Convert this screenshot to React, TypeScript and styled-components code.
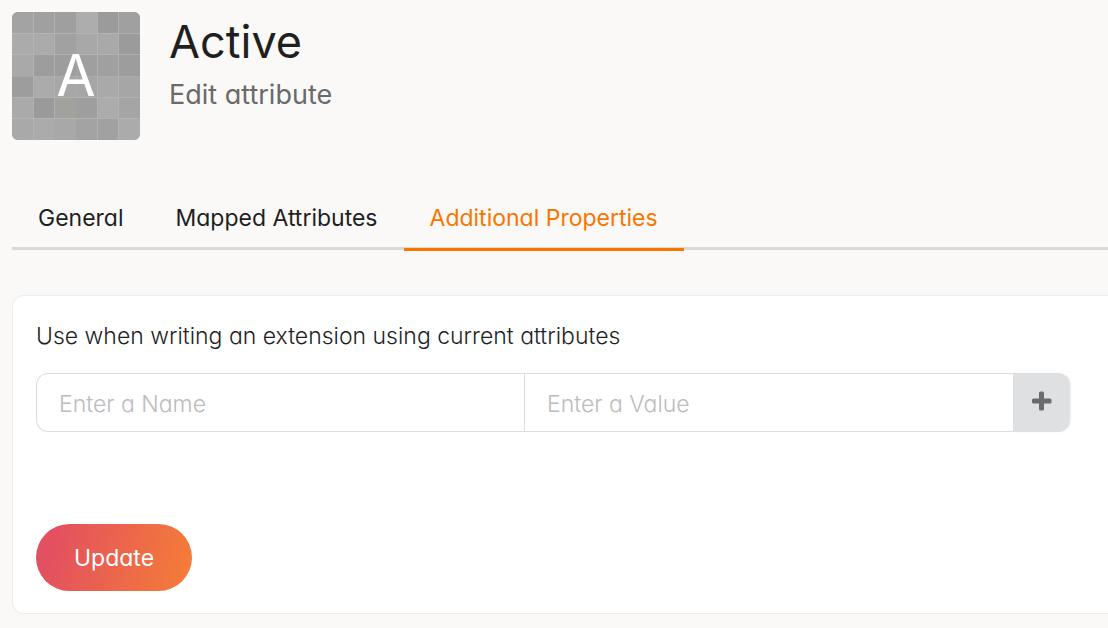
import React, { useState } from "react";
import styled, { createGlobalStyle } from "styled-components";

const GlobalStyle = createGlobalStyle`
  *, *::before, *::after { box-sizing: border-box; }
  body {
    margin: 0;
    background: #faf9f8;
    color: #1f1f1f;
    font-family: Inter, "Open Sans", sans-serif;
    font-feature-settings: "cv11";
    font-size: 23px;
    font-weight: 300;
    line-height: 32px;
  }
  button, input { font: inherit; font-feature-settings: inherit; letter-spacing: inherit; }
`;

const Page = styled.main`
  padding: 12px 0 14px 12px;
`;

const Header = styled.header`
  display: flex;
  gap: 29px;
`;

const Avatar = styled.div`
  display: grid;
  flex: none;
  width: 128px;
  height: 128px;
  overflow: hidden;
  border-radius: 6px;
  background: #a6a6a6;
  & > * { grid-area: 1 / 1; }
`;

const Initial = styled.span`
  place-self: center;
  color: #fff;
  font-size: 57px;
  font-weight: 400;
  line-height: 128px;
`;

const Title = styled.h1`
  margin: 0;
  font-size: 45px;
  font-weight: 400;
  line-height: 60px;
`;

const Subtitle = styled.p`
  margin: 5px 0 0;
  color: #6a6a6a;
  font-size: 27px;
  font-weight: 400;
  line-height: 36px;
`;

const TabList = styled.nav`
  display: flex;
  margin-top: 47px;
  border-bottom: 3px solid #d9d9d8;
`;

const Tab = styled.a<{ $active?: boolean }>`
  margin-bottom: -4px;
  padding: 15px 26px 14px;
  border-bottom: 3px solid ${(p) => (p.$active ? "#f87600" : "transparent")};
  color: ${(p) => (p.$active ? "#f87600" : "inherit")};
  font-weight: 400;
  text-decoration: none;
  white-space: nowrap;
`;

const Card = styled.form`
  margin-top: 45px;
  padding: 24px 38px 22px 23px;
  border: 1px solid #ececec;
  border-right: 0;
  border-radius: 12px 0 0 12px;
  background: #fff;
`;

const Hint = styled.p`
  margin: 0;
`;

const PropertyRow = styled.div`
  display: flex;
  height: 59px;
  margin-top: 21px;
`;

const Field = styled.input`
  flex: 1;
  min-width: 0;
  padding: 2px 22px 0;
  border: 1px solid #dcdddd;
  border-right-width: 0;
  border-radius: 0;
  outline: 0;
  background: #fff;
  color: #1f1f1f;
  &:first-child { border-radius: 12px 0 0 12px; }
  & + & { margin-left: -1px; }
  &::placeholder { color: #bcbcbc; opacity: 1; }
`;

const AddButton = styled.button`
  display: grid;
  place-items: center;
  width: 57px;
  padding: 0 0 4px;
  border: 0;
  border-radius: 0 12px 12px 0;
  background: #dfe0e1;
  box-shadow: 1px 0 2px #0000000f;
  cursor: pointer;
`;

const UpdateButton = styled.button`
  display: block;
  height: 67px;
  margin-top: 92px;
  padding: 0 38px;
  border: 0;
  border-radius: 34px;
  background: linear-gradient(105deg, #e35060 12%, #f47b38 94%);
  color: #fff;
  font-weight: 400;
  cursor: pointer;
`;

const shades = [
  ["#a3a3a3", "#a0a0a0", "#9f9f9f", "#adadad", "#9b9b9b", "#a0a0a0"],
  ["#ababab", "#ababab", "#a1a1a1", "#a8a8a8", "#a9a9a9", "#9b9b9b"],
  ["#a9a9a9", "#9d9d9d", "#9d9d9d", "#9f9f9f", "#a0a0a0", "#9d9d9d"],
  ["#9d9d9d", "#ababab", "#a7a7a7", "#a6a6a6", "#a9a9a9", "#a6a6a6"],
  ["#aaaaaa", "#9a9a9a", "#a1a19e", "#9e9e9e", "#acacac", "#a5a5a5"],
  ["#a9a9a9", "#ababab", "#a8a8a8", "#a3a3a3", "#a1a1a1", "#ababab"],
];
const edges = [0, 21, 42, 64, 85, 106, 128];

function Mosaic() {
  return (
    <svg width="128" height="128" viewBox="0 0 128 128" aria-hidden="true">
      {shades.map((row, y) =>
        row.map((fill, x) => (
          <rect
            key={`${x}-${y}`}
            x={edges[x]}
            y={edges[y]}
            width={edges[x + 1] - edges[x]}
            height={edges[y + 1] - edges[y]}
            fill={fill}
          />
        ))
      )}
      <path
        d="M21.5 0V128M42.5 0V106M85.5 0V128M106.5 0V128M0 21.5H128M0 42.5H128M0 85.5H128M0 106.5H128"
        stroke="#b5b5b5"
        strokeOpacity=".8"
      />
      <path d="M64.5 42V85M0 64.5H128" stroke="#b5b5b5" strokeOpacity=".4" />
    </svg>
  );
}

const tabs = ["General", "Mapped Attributes", "Additional Properties"];

export default function App() {
  const [active, setActive] = useState(2);
  return (
    <>
      <GlobalStyle />
      <Page>
        <Header>
          <Avatar>
            <Mosaic />
            <Initial aria-hidden="true">A</Initial>
          </Avatar>
          <div>
            <Title>Active</Title>
            <Subtitle>Edit attribute</Subtitle>
          </div>
        </Header>
        <TabList aria-label="Attribute sections">
          {tabs.map((label, i) => (
            <Tab
              key={label}
              href="#"
              $active={i === active}
              aria-current={i === active ? "page" : undefined}
              onClick={(e) => {
                e.preventDefault();
                setActive(i);
              }}
            >
              {label}
            </Tab>
          ))}
        </TabList>
        <Card onSubmit={(e) => e.preventDefault()}>
          <Hint>Use when writing an extension using current attributes</Hint>
          <PropertyRow>
            <Field type="text" aria-label="Name" placeholder="Enter a Name" />
            <Field type="text" aria-label="Value" placeholder="Enter a Value" />
            <AddButton type="button" aria-label="Add property">
              <svg width="20" height="20" viewBox="0 0 20 20" aria-hidden="true">
                <path
                  d="M8.5 0.500h2a1.500 1.500 0 0 1 1.500 1.500v5.500H18a1.500 1.500 0 0 1 1.500 1.500v2a1.500 1.500 0 0 1-1.500 1.500h-6V18a1.500 1.500 0 0 1-1.500 1.500h-2A1.500 1.500 0 0 1 7 18v-5.500H1.500A1.500 1.500 0 0 1 0 11V9a1.500 1.500 0 0 1 1.500-1.500H7V2A1.500 1.500 0 0 1 8.500.5Z"
                  fill="#6b6b6b"
                />
              </svg>
            </AddButton>
          </PropertyRow>
          <UpdateButton type="submit">Update</UpdateButton>
        </Card>
      </Page>
    </>
  );
}
